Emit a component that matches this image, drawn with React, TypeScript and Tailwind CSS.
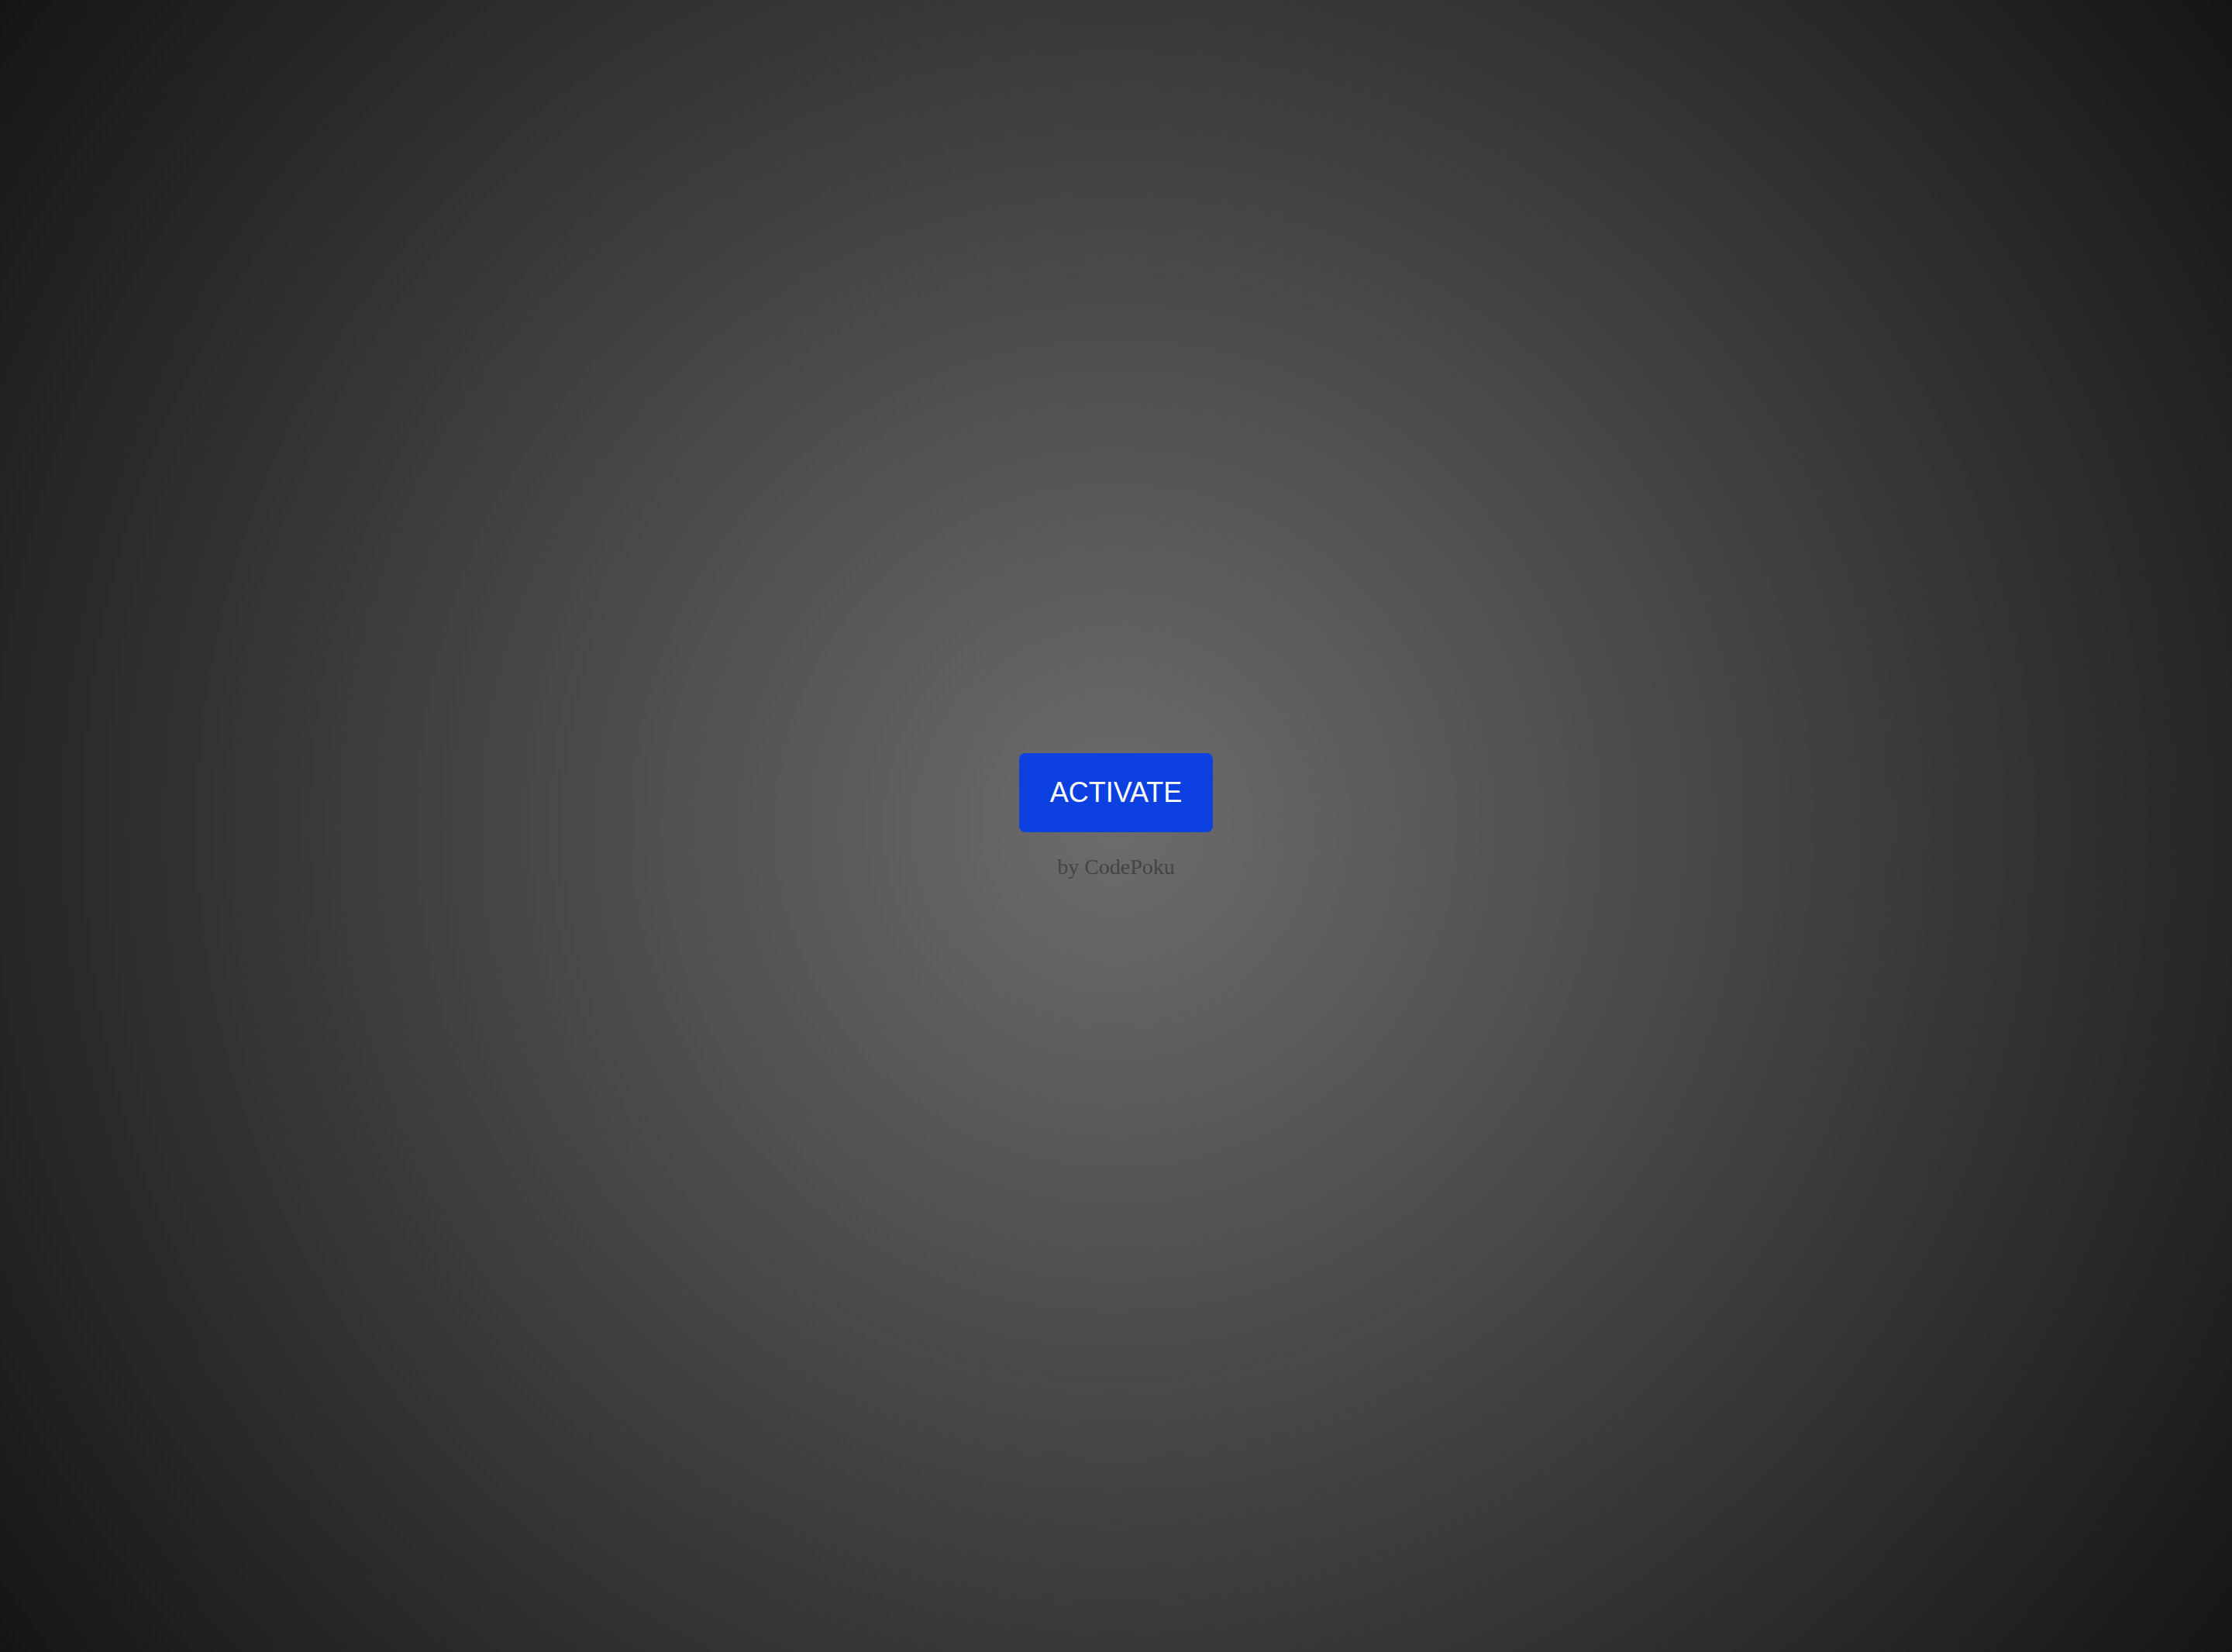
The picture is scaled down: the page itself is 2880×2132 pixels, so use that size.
import React from "react";

const App = () => {
  return (
    <div className="min-h-screen w-full flex flex-col items-center justify-center bg-[radial-gradient(circle,#6c6c6c_0%,#151515_100%)]">
      <button className="rounded-lg bg-[#0d40e0] px-[40px] py-[30px] text-[36px] leading-[42px] text-white font-['Liberation_Sans',Arial,sans-serif]">
        ACTIVATE
      </button>
      <p className="mt-[24px] mb-[20px] text-[28px] leading-[42px] text-[#444444] font-['Liberation_Serif','Times_New_Roman',serif]">
        by CodePoku
      </p>
    </div>
  );
};

export default App;
